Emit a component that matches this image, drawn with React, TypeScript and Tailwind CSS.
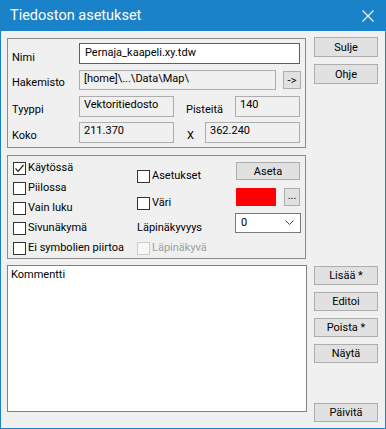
import React from 'react';

const Btn: React.FC<{ label: string; className?: string }> = ({ label, className = '' }) => (
  <div
    className={`flex items-center justify-center bg-[#e1e1e1] border border-[#adadad] text-black leading-none ${className}`}
  >
    {label}
  </div>
);

const Field: React.FC<{ value: string; className?: string }> = ({ value, className = '' }) => (
  <div className={`flex items-center px-[4px] pb-[2px] bg-[#f0f0f0] border border-[#adadad] ${className}`}>
    {value}
  </div>
);

const Check: React.FC<{ label: string; checked?: boolean; disabled?: boolean }> = ({
  label,
  checked = false,
  disabled = false,
}) => (
  <div className="flex items-center h-[20px]">
    <div
      className={`w-[13px] h-[13px] border flex items-center justify-center ${
        disabled ? 'border-[#cccccc] bg-[#f7f7f7]' : 'border-[#333333] bg-white'
      }`}
    >
      {checked && (
        <svg width="11" height="11" viewBox="0 0 11 11">
          <path d="M1.5 5.5 L4.2 8.3 L9.5 2" fill="none" stroke="#222" strokeWidth="1.2" />
        </svg>
      )}
    </div>
    <span className={`ml-[2px] ${disabled ? 'text-[#a0a0a0]' : 'text-black'}`}>{label}</span>
  </div>
);

export default function App() {
  return (
    <div className="w-[386px] h-[429px] bg-[#1a82c8] flex flex-col font-['Roboto',Arial,sans-serif] text-[11px] text-black">
      {/* Title bar */}
      <div className="h-[31px] flex items-center justify-between pl-[10px] pr-[12px] text-white">
        <span className="text-[14.5px] pt-[1px]">Tiedoston asetukset</span>
        <svg width="12" height="12" viewBox="0 0 12 12">
          <path d="M0.5 0.5 L11.5 11.5 M11.5 0.5 L0.5 11.5" stroke="white" strokeWidth="1.1" />
        </svg>
      </div>

      {/* Body */}
      <div className="flex-1 mx-[1px] mb-[1px] bg-[#f0f0f0] flex flex-col pl-[6px]">
        <div className="flex">
          <div className="w-[299px] flex flex-col pt-[7px]">
            {/* File group */}
            <div className="h-[110px] border border-[#8c8c8c] pl-[71px] pt-[4px]">
              <div className="flex h-[21px]">
                <span className="w-0 -ml-[67px] mr-[67px] pt-[8px] leading-[14px]">Nimi</span>
                <div className="w-[221px] flex items-center px-[5px] pb-[1px] bg-white border border-[#0078d7]">
                  Pernaja_kaapeli.xy.tdw
                </div>
              </div>
              <div className="flex h-[20px] mt-[6px]">
                <span className="w-0 -ml-[67px] mr-[67px] pt-[6px] leading-[14px]">Hakemisto</span>
                <Field value="[home]\...\Data\Map\" className="w-[197px]" />
                <Btn label="->" className="w-[18px] h-[18px] ml-[7px] mt-[1px]" />
              </div>
              <div className="flex h-[21px] mt-[6px]">
                <span className="w-0 -ml-[67px] mr-[67px] pt-[7px] leading-[14px]">Tyyppi</span>
                <Field value="Vektoritiedosto" className="w-[95px]" />
                <span className="w-[49px] ml-[12px] pt-[7px] leading-[14px]">Pisteitä</span>
                <Field value="140" className="w-[65px]" />
              </div>
              <div className="flex h-[21px] mt-[5px]">
                <span className="w-0 -ml-[67px] mr-[67px] pt-[7px] leading-[14px]">Koko</span>
                <Field value="211.370" className="w-[95px]" />
                <span className="w-[18px] ml-[13px] pt-[7px] leading-[14px]">X</span>
                <Field value="362.240" className="w-[95px]" />
              </div>
            </div>

            {/* Options group */}
            <div className="h-[104px] mt-[7px] border border-[#8c8c8c] flex pl-[5px]">
              <div className="w-[124px] flex flex-col pt-[2px]">
                <Check label="Käytössä" checked />
                <Check label="Piilossa" />
                <Check label="Vain luku" />
                <Check label="Sivunäkymä" />
                <Check label="Ei symbolien piirtoa" />
              </div>
              <div className="w-[99px] flex flex-col pt-[10px]">
                <Check label="Asetukset" />
                <div className="mt-[7px]">
                  <Check label="Väri" />
                </div>
                <div className="h-[20px] mt-[5px] flex items-center">Läpinäkyvyys</div>
                <Check label="Läpinäkyvä" disabled />
              </div>
              <div className="flex flex-col pt-[6px]">
                <Btn label="Aseta" className="w-[64px] h-[18px]" />
                <div className="flex mt-[8px] h-[18px]">
                  <div className="w-[40px] h-[18px] bg-[#ff0000]" />
                  <Btn label="..." className="w-[16px] h-[18px] ml-[8px] pb-[4px]" />
                </div>
                <div className="w-[66px] h-[20px] -ml-[1px] mt-[7px] bg-white border border-[#7a7a7a] flex items-center justify-between pl-[5px] pr-[6px]">
                  <span>0</span>
                  <svg width="9" height="6" viewBox="0 0 9 6">
                    <path d="M0.5 0.5 L4.5 4.5 L8.5 0.5" fill="none" stroke="#444" strokeWidth="1" />
                  </svg>
                </div>
              </div>
            </div>
          </div>

          <div className="w-[64px] ml-[8px] flex flex-col pt-[6px]">
            <Btn label="Sulje" className="h-[20px]" />
            <Btn label="Ohje" className="h-[20px] mt-[7px]" />
          </div>
        </div>

        <div className="flex mt-[6px]">
          <div className="w-[300px] h-[147px] bg-white border border-[#828282] pl-[3px] pt-[2px] leading-[14px]">
            Kommentti
          </div>
          <div className="w-[64px] ml-[7px] flex flex-col pt-[1px]">
            <Btn label="Lisää *" className="h-[19px]" />
            <Btn label="Editoi" className="h-[19px] mt-[7px]" />
            <Btn label="Poista *" className="h-[19px] mt-[7px]" />
            <Btn label="Näytä" className="h-[19px] mt-[7px]" />
            <Btn label="Päivitä" className="h-[19px] mt-[40px]" />
          </div>
        </div>
      </div>
    </div>
  );
}
